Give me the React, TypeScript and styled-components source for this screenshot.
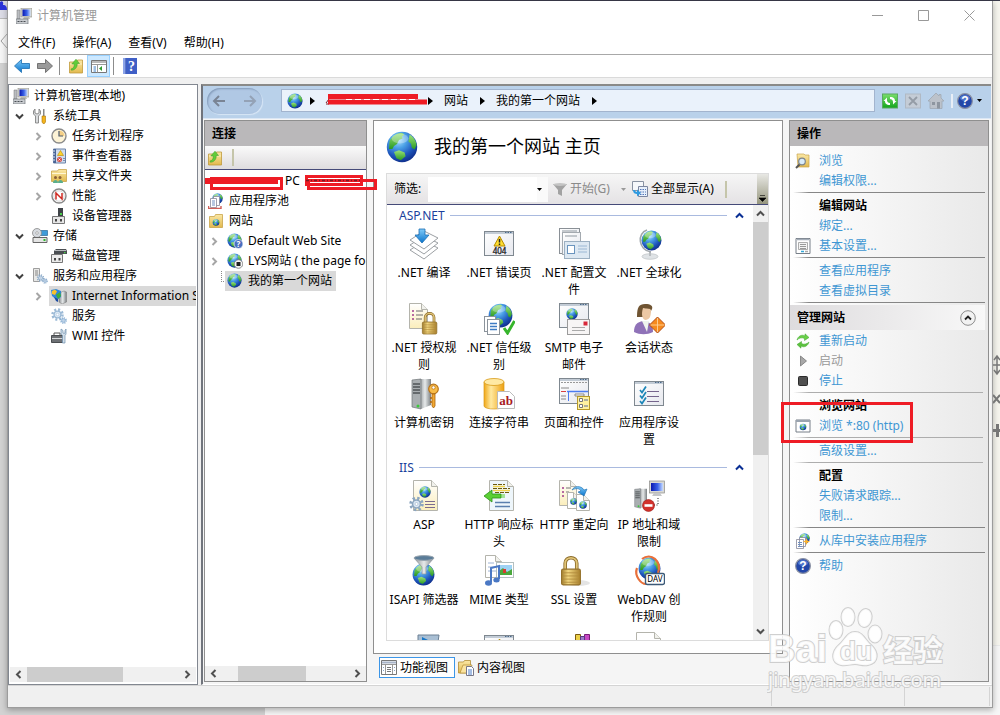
import React from "react";
import styled, { createGlobalStyle, css } from "styled-components";

const GlobalStyle = createGlobalStyle`
  *, *::before, *::after { box-sizing: border-box; }
  body {
    margin: 0;
    font-family: "Noto Sans", "Noto Sans CJK SC", sans-serif;
    font-size: 12px;
    line-height: 16px;
    color: #000;
  }
  button, input { font: inherit; color: inherit; }
  button {
    border: 0;
    padding: 0;
    background: none;
    white-space: nowrap;
    text-align: left;
  }
  ul { list-style: none; margin: 0; padding: 0; }
  h1, h2, h3 { margin: 0; font-weight: normal; font-size: 12px; }
  svg { display: block; flex: none; }
`;

/* ---------- desktop and window frame ---------- */

const Desktop = styled.div`
  position: relative;
  display: flex;
  flex-direction: column;
  height: 100vh;
  min-height: 560px;
  padding: 1px 7px 7px;
  overflow: hidden;
  background:
    linear-gradient(#3a3a4a, #3a3a4a) 0 0 / 100% 1px no-repeat,
    linear-gradient(#dcdce6 18px, #bbb 18px, #bbb 19px, #f6f6f6 19px, #f6f6f6 63px, #ccc 63px, transparent 64px) 0 0 / 7px 100% no-repeat,
    linear-gradient(#f6f5ee 645px, #ddd 645px, #f6f6f6 646px) 100% 0 / 7px 100% no-repeat,
    linear-gradient(90deg, #d2d2d2 265px, #f5f5f5 265px);
`;

const DesktopGlyphs = styled.svg<{ $side: "left" | "right" }>`
  position: absolute;
  top: 0;
  ${(p) => p.$side}: 0;
`;

const Window = styled.main`
  flex: 1;
  min-height: 0;
  display: flex;
  flex-direction: column;
  background: #f0f0f0;
  border: 1px solid #9c9c9c;
  border-top: 0;
  box-shadow: 0 2px 6px rgba(0, 0, 0, 0.3);
`;

const TitleBar = styled.header`
  display: flex;
  align-items: center;
  height: 29px;
  padding-left: 8px;
  background: #fff;
  color: #999;
`;

const TitleText = styled.h1`
  flex: 1;
  padding-left: 5px;
`;

const CaptionButton = styled.button`
  display: flex;
  align-items: center;
  justify-content: center;
  width: 46px;
  height: 29px;
`;

const MenuBar = styled.nav`
  display: flex;
  align-items: center;
  gap: 17px;
  height: 25px;
  padding: 2px 10px 0;
  background: #fff;
  border-bottom: 1px solid #a8a8a8;
`;

const ToolBar = styled.div`
  display: flex;
  align-items: center;
  height: 23px;
  padding-left: 2px;
  background: #fff;
  border-bottom: 1px solid #dadada;
`;

const ToolButton = styled.button<{ $active?: boolean }>`
  display: flex;
  align-items: center;
  justify-content: center;
  width: 23px;
  height: 22px;
  ${(p) =>
    p.$active &&
    css`
      background: #cce8ff;
      border: 1px solid #99d1ff;
    `}
`;

const ToolDivider = styled.span`
  width: 1px;
  height: 18px;
  margin: 0 4px 0 3px;
  background: #8c8c8c;
`;

const Workspace = styled.div`
  flex: 1;
  min-height: 0;
  display: flex;
  gap: 3px;
  padding-top: 6px;
`;

const StatusBar = styled.footer`
  display: flex;
  justify-content: flex-end;
  height: 22px;
  padding: 1px 2px 1px 0;
  border-top: 1px solid #d4d4d4;
`;

const StatusCell = styled.span<{ $w: number }>`
  width: ${(p) => p.$w}px;
  border-left: 1px solid #d4d4d4;
`;

/* ---------- trees ---------- */

const ConsolePane = styled.aside`
  display: flex;
  flex-direction: column;
  width: 190px;
  padding: 0 1px 2px;
  background: #fff;
  border: 1px solid #828790;
`;

const Tree = styled.ul`
  flex: 1;
  min-height: 0;
  padding-top: 1px;
  overflow: hidden;
`;

const TreeRow = styled.li<{ $pad: number }>`
  display: flex;
  align-items: center;
  height: 20px;
  padding-left: ${(p) => p.$pad}px;
`;

const Twisty = styled.span`
  display: flex;
  flex: none;
  width: 15px;
`;

const NodeButton = styled.button<{ $selected?: boolean; $wide?: boolean }>`
  display: flex;
  align-items: center;
  gap: 5px;
  height: 20px;
  padding: 0 4px 0 2px;
  ${(p) => p.$wide && "flex: none; min-width: 100%;"}
  ${(p) => p.$selected && "background: #d9d9d9;"}
`;

/* ---------- scroll bars ---------- */

const ScrollTrack = styled.div<{ $vertical?: boolean }>`
  display: flex;
  flex: none;
  flex-direction: ${(p) => (p.$vertical ? "column" : "row")};
  ${(p) => (p.$vertical ? "width: 15px;" : "height: 15px;")}
  background: #f0f0f0;
`;

const ScrollButton = styled.button<{ $vertical?: boolean }>`
  display: flex;
  align-items: center;
  justify-content: center;
  flex: none;
  width: ${(p) => (p.$vertical ? 15 : 17)}px;
  height: ${(p) => (p.$vertical ? 17 : 15)}px;
`;

const ScrollLane = styled.div`
  flex: 1;
  min-height: 0;
`;

const Thumb = styled.div<{ $start: string; $size: string; $vertical?: boolean }>`
  background: #cdcdcd;
  ${(p) =>
    p.$vertical
      ? `height: ${p.$size}; width: 15px;`
      : `width: ${p.$size}; height: 15px; margin-left: ${p.$start};`}
`;

/* ---------- manager frame ---------- */

const Manager = styled.section`
  flex: 1;
  min-width: 0;
  display: flex;
  flex-direction: column;
  margin-right: 1px;
  background: #f5f5f5;
  border-top: 2px solid #8a8a88;
  border-left: 2px solid #70747c;
  border-bottom: 1px solid #fff;
`;

const AddressRow = styled.div`
  display: flex;
  align-items: center;
  height: 33px;
  padding: 0 9px 3px 4px;
  background: #b9d1ea;
  border-bottom: 1px solid #dbe7f5;
`;

const NavCapsule = styled.div`
  display: flex;
  align-items: center;
  justify-content: space-between;
  width: 55px;
  height: 26px;
  padding: 0 5px;
  margin-right: 19px;
  border-radius: 13px;
  background: #b0c8e4;
  box-shadow: inset 1px 1px 2px #8299b8, 1px 1px 1px #d8e6f6;
`;

const AddressBox = styled.div`
  flex: 1;
  display: flex;
  align-items: center;
  height: 23px;
  padding-left: 5px;
  background: #eaf2fb;
  border: 1px solid #a2b4ce;
`;

const AddressGlobe = styled.span`
  margin-right: 7px;
`;

const Crumb = styled.button`
  margin: 0 12px 0 11px;
`;

const StruckName = styled.svg`
  overflow: visible;
`;

const AddressTools = styled.div`
  display: flex;
  align-items: center;
  gap: 7px;
  padding-left: 7px;
`;

const HelpGroup = styled.div`
  display: flex;
  align-items: center;
  gap: 4px;
`;

const AddressDivider = styled.span`
  width: 2px;
  height: 14px;
  background: #e8eef6;
`;

const Panels = styled.div`
  flex: 1;
  min-height: 0;
  display: flex;
  gap: 6px;
  padding: 1px 2px 2px 1px;
`;

const PanelHead = styled.h2`
  flex: none;
  height: 25px;
  padding-left: 7px;
  line-height: 25px;
  font-weight: bold;
  background: #bab8ba;
`;

const ConnectionsPane = styled.aside`
  position: relative;
  display: flex;
  flex-direction: column;
  width: 163px;
  background: #fff;
  border: 1px solid #8f8f8f;
`;

const ConnectionsTools = styled.div`
  display: flex;
  align-items: center;
  gap: 9px;
  height: 24px;
  padding-left: 2px;
  background: linear-gradient(#fafafa, #dedcde);
  border-bottom: 1px solid #454a78;
`;

const BeigeDivider = styled.span<{ $gap?: number }>`
  width: 2px;
  height: 17px;
  margin-left: ${(p) => p.$gap ?? 0}px;
  background: #c5c5aa;
`;

const RedMarks = styled.svg`
  position: absolute;
  left: 0;
  top: 53px;
  overflow: visible;
`;

/* ---------- middle column ---------- */

const MiddleColumn = styled.div`
  flex: 1;
  min-width: 0;
  display: flex;
  flex-direction: column;
`;

const HomePane = styled.section`
  flex: 1;
  min-height: 0;
  display: flex;
  flex-direction: column;
  padding: 0 13px 12px 12px;
  background: #fff;
  border: 1px solid #8f8f8f;
`;

const HomeHeader = styled.header`
  display: flex;
  align-items: center;
  gap: 16px;
  height: 52px;
`;

const HomeTitle = styled.h2`
  padding-bottom: 2px;
  font-size: 18px;
  line-height: 24px;
`;

const FeatureBox = styled.div`
  flex: 1;
  min-height: 0;
  display: flex;
  flex-direction: column;
  border: 1px solid #dcdcdc;
`;

const FilterBar = styled.form`
  display: flex;
  align-items: center;
  height: 31px;
  padding-left: 7px;
  background: linear-gradient(#f6f6f6, #e4e2e4);
  border-bottom: 1px solid #454a78;
`;

const FilterLabel = styled.label`
  width: 34px;
`;

const FilterInput = styled.input`
  width: 109px;
  height: 25px;
  border: 0;
  outline: 0;
  background: #fff;
`;

const FilterDrop = styled.button`
  display: flex;
  align-items: center;
  width: 11px;
  height: 25px;
  margin-right: 5px;
  background: #fafafa;
`;

const FilterAction = styled.button<{ $disabled?: boolean }>`
  display: flex;
  align-items: center;
  gap: 3px;
  color: ${(p) => (p.$disabled ? "#8a8a8a" : "#000")};
`;

const SplitArrow = styled.button`
  width: 22px;
  padding-left: 11px;
`;

const Overflow = styled.button`
  display: flex;
  align-items: flex-end;
  justify-content: center;
  align-self: stretch;
  width: 11px;
  margin-left: auto;
  padding-bottom: 2px;
  background: linear-gradient(#e8e8e4, #96967e);
`;

const FeatureScroller = styled.div`
  flex: 1;
  min-height: 0;
  display: flex;
`;

const FeatureList = styled.div`
  flex: 1;
  min-width: 0;
  overflow: hidden;
`;

const GroupHead = styled.h3`
  display: flex;
  align-items: center;
  height: 21px;
  padding: 0 9px 0 12px;
  color: #1b3f9c;
`;

const GroupRule = styled.span`
  flex: 1;
  height: 1px;
  margin: 0 8px 0 5px;
  background: #a9badf;
`;

const FeatureGrid = styled.div`
  display: grid;
  grid-template-columns: repeat(auto-fill, 75px);
  grid-auto-rows: 75px;
  margin: 1px 0 5px;
`;

const FeatureButton = styled.button`
  display: flex;
  flex-direction: column;
  align-items: center;
  gap: 4px;
  height: 75px;
  padding: 1px 1px 0 0;
  text-align: center;
  line-height: 17px;
`;

const ViewTabs = styled.div`
  display: flex;
  gap: 2px;
  height: 28px;
  padding: 3px 0 0 6px;
`;

const ViewTab = styled.button<{ $active?: boolean }>`
  display: flex;
  align-items: center;
  gap: 3px;
  height: 21px;
  padding: 0 6px 0 1px;
  border: ${(p) => (p.$active ? "1px solid #3c96e8" : "0")};
  ${(p) => p.$active && "background: #fff;"}
`;

/* ---------- actions ---------- */

const ActionsPane = styled.aside`
  display: flex;
  flex-direction: column;
  width: 200px;
  background: linear-gradient(90deg, #fff, #e9e9e9);
  border: 1px solid #8f8f8f;
`;

const ActionList = styled.ul`
  padding: 4px 3px 0 0;
`;

const ActionRow = styled.li`
  display: flex;
  align-items: center;
  height: 20px;
  padding-top: 2px;
`;

const ActionIcon = styled.span`
  display: flex;
  justify-content: center;
  flex: none;
  width: 26px;
  margin-right: 3px;
`;

const ActionLink = styled.a<{ $disabled?: boolean }>`
  color: ${(p) => (p.$disabled ? "#999" : "#3f97d3")};
  text-decoration: none;
`;

const ActionRule = styled.li<{ $soft?: boolean }>`
  height: 5px;
  padding: 2px 0;

  &::before {
    content: "";
    display: block;
    height: 1px;
    margin: 0 ${(p) => (p.$soft ? 2 : 0)}px 0 3px;
    background: linear-gradient(90deg, transparent, ${(p) => (p.$soft ? "#adadad" : "#868686")} 16px);
  }
`;

const ActionSection = styled.li`
  display: flex;
  align-items: center;
  justify-content: space-between;
  height: 25px;
  padding: 0 9px 0 7px;
  background: linear-gradient(90deg, #dedcde, #f8f8f8);
  font-weight: bold;
`;

const Framed = styled.li`
  position: relative;
`;

const HighlightFrame = styled.span`
  position: absolute;
  left: -9px;
  top: 7px;
  width: 132px;
  height: 41px;
  border: 3px solid #ee1c25;
  pointer-events: none;
`;

const Watermark = styled.svg`
  position: absolute;
  right: 47px;
  bottom: 18px;
  pointer-events: none;
`;

const SharedDefs = styled.svg`
  position: absolute;
`;

/* ---------- drawings ---------- */

type IconProps = { size?: number; box?: number; children?: React.ReactNode };

const Icon = ({ size = 16, box, children }: IconProps) => (
  <svg width={size} height={size} viewBox={`0 0 ${box ?? size} ${box ?? size}`} aria-hidden="true">
    {children}
  </svg>
);

const Gradients = () => (
  <SharedDefs width="0" height="0" aria-hidden="true">
    <defs>
      <radialGradient id="sea" cx=".38" cy=".26" r=".78">
        <stop offset="0" stopColor="#b4e6ff" />
        <stop offset=".35" stopColor="#4a9fe6" />
        <stop offset=".7" stopColor="#1e56bc" />
        <stop offset="1" stopColor="#0e2c88" />
      </radialGradient>
      <linearGradient id="land" x2="0" y2="1">
        <stop offset="0" stopColor="#9be27a" />
        <stop offset="1" stopColor="#2a9a22" />
      </linearGradient>
      <linearGradient id="folder" x2="0" y2="1">
        <stop offset="0" stopColor="#fbe8a6" />
        <stop offset="1" stopColor="#e2b94e" />
      </linearGradient>
      <linearGradient id="gold" x2="1">
        <stop offset="0" stopColor="#a07c2c" />
        <stop offset=".35" stopColor="#f2d780" />
        <stop offset="1" stopColor="#a87f2c" />
      </linearGradient>
      <linearGradient id="drum" x2="1">
        <stop offset="0" stopColor="#f0a818" />
        <stop offset=".35" stopColor="#ffe9a0" />
        <stop offset="1" stopColor="#eea010" />
      </linearGradient>
      <linearGradient id="steel" x2="1">
        <stop offset="0" stopColor="#8b8f92" />
        <stop offset=".5" stopColor="#e6e9ea" />
        <stop offset="1" stopColor="#7b8083" />
      </linearGradient>
      <linearGradient id="screen" x2="1">
        <stop offset="0" stopColor="#0a18b0" />
        <stop offset=".55" stopColor="#3a62e8" />
        <stop offset="1" stopColor="#c8dcff" />
      </linearGradient>
      <linearGradient id="sheet" x2="1" y2="1">
        <stop offset="0" stopColor="#fff" />
        <stop offset="1" stopColor="#e6e8ee" />
      </linearGradient>
      <linearGradient id="cream" x2="0" y2="1">
        <stop offset="0" stopColor="#fff" />
        <stop offset="1" stopColor="#fbeebb" />
      </linearGradient>
      <linearGradient id="blue" x2="0" y2="1">
        <stop offset="0" stopColor="#7fcaf8" />
        <stop offset="1" stopColor="#0a74cc" />
      </linearGradient>
      <linearGradient id="green" x2="0" y2="1">
        <stop offset="0" stopColor="#7be06c" />
        <stop offset="1" stopColor="#12a41c" />
      </linearGradient>
    </defs>
  </SharedDefs>
);

const GlobeShape = ({ x = 0, y = 0, d = 16 }: { x?: number; y?: number; d?: number }) => (
  <g transform={`translate(${x} ${y}) scale(${d / 16})`}>
    <circle cx="8" cy="8" r="7.6" fill="url(#sea)" />
    <path d="M1.800 5C3.300 2.300 5.500 1 8 1l1.200.7L8 2.700l.3 1L6.500 4.500 5.500 6.500 4 7.500 3.200 9 1.500 9z" fill="url(#land)" />
    <path d="M11.800 1.800c2 1.200 3.200 3 3.500 5.200l-1 2.200-1.400-.8-.4-2-1.300-1.200z" fill="url(#land)" />
    <path d="M4 10.500l2.500-.9 2.800 1.200.5 1.800-2.400 2-2.200-1z" fill="url(#land)" />
    <ellipse cx="7" cy="3.800" rx="4.200" ry="2.400" fill="#fff" opacity=".3" />
  </g>
);

const GlobeIcon = ({ size = 16 }: { size?: number }) => (
  <Icon size={size} box={16}>
    <GlobeShape />
  </Icon>
);

const ComputerIcon = () => (
  <Icon>
    <path d="M5 0h11v9H5z" fill="#d6d6ce" stroke="#8c8c88" strokeWidth=".6" />
    <path d="M6.500 1.500h8V8h-8z" fill="url(#screen)" />
    <path d="M8 9h5l1 2H7z" fill="#b8b8b0" />
    <path d="M1 2h3v9H1z" fill="#b9bcc0" stroke="#777" strokeWidth=".5" />
    <path d="M0 11h12v5H0z" fill="#c9ccd0" stroke="#6f747a" strokeWidth=".7" />
    <path d="M1.500 13.500h2m1 0h2m1 0h2" stroke="#4a4f55" />
  </Icon>
);

const HelpBookIcon = () => (
  <Icon>
    <path d="M1 0h14v16H1z" fill="#2c4aa8" />
    <path d="M1 0h2.500v16H1z" fill="#8ca4e8" />
    <path d="M4 0h11v16H4z" fill="#3f5fc6" />
    <text x="9.500" y="13" fontSize="14" fontWeight="bold" textAnchor="middle" fill="#fff" fontFamily="Liberation Serif, serif">?</text>
  </Icon>
);

const HelpRoundIcon = () => (
  <Icon>
    <circle cx="8" cy="8" r="7.400" fill="#2347a8" stroke="#8c92a4" strokeWidth="1.200" />
    <ellipse cx="8" cy="5" rx="5" ry="3" fill="#6f94e4" opacity=".6" />
    <text x="8" y="12.300" fontSize="12" fontWeight="bold" textAnchor="middle" fill="#fff" fontFamily="Liberation Sans, sans-serif">?</text>
  </Icon>
);

const FolderUpIcon = () => (
  <Icon>
    <path d="M1.500 4h7l1-2h5v13h-13z" fill="url(#folder)" stroke="#c09a3c" strokeWidth=".8" />
    <path d="M2 6h12" stroke="#fff4cc" strokeWidth=".8" />
    <path d="M3 11c2.500-.5 3.500-2.500 3.200-5H3.800L8 1.200l3.500 4.300H9.200c.3 4-2.200 6.500-5.700 6.800z" fill="#62cc3a" stroke="#3a9a20" strokeWidth=".5" />
  </Icon>
);

const ArrowIcon = ({ back }: { back?: boolean }) => (
  <Icon>
    <path
      d={back ? "M0.500 8l7-6.500v4h8v5h-8v4z" : "M15.500 8l-7-6.500v4h-8v5h8v4z"}
      fill={back ? "url(#blue)" : "#9a9a9a"}
      stroke={back ? "#2a78b8" : "#6a6a6a"}
      strokeWidth=".9"
    />
  </Icon>
);

const PaneIcon = () => (
  <Icon>
    <path d="M.5 2.500h15v12H.5z" fill="#fff" stroke="#777" />
    <path d="M1 3h14v2H1z" fill="#b9b9b9" />
    <path d="M1 6.500h14M6.500 7v7.500" stroke="#999" />
    <path d="M2.500 9h2.500m-2.500 2h2.500m-2.500 2h2.500" stroke="#3c7ec4" />
    <path d="M11 8v5L8 10.500z" fill="#2f9a2f" />
  </Icon>
);

const ToolsIcon = () => (
  <Icon>
    <path d="M3 1v4l2 1 2-1V1l1.500 2v3L6.500 8v7h-3V8L1.500 6V3z" fill="#d9dbdd" stroke="#777" strokeWidth=".8" />
    <path d="M11 1h1.500v8H11z" fill="#888" />
    <path d="M10 8h3.500v6l-1 1.500h-1.500l-1-1.500z" fill="#f4b41c" stroke="#a8740a" strokeWidth=".6" />
  </Icon>
);

const ClockIcon = () => (
  <Icon>
    <circle cx="8" cy="8" r="7" fill="#fdf3d6" stroke="#8b8b8b" strokeWidth="1.400" />
    <path d="M8 8V2.500A5.500 5.500 0 0 1 13.500 8z" fill="#f4cf86" />
    <path d="M8 3v5h4" fill="none" stroke="#4c5a6e" strokeWidth="1.200" />
  </Icon>
);

const EventIcon = () => (
  <Icon>
    <path d="M2.500 1h12v14h-12z" fill="#cfdcee" stroke="#6a82a8" />
    <path d="M2.500 1h2.500v14H2.500z" fill="#4a6596" />
    <path d="M1 3h3M1 6h3M1 9h3M1 12h3" stroke="#dfe7f4" />
    <path d="M9.500 2.500l3 5h-6z" fill="#ffd42a" stroke="#b98a00" strokeWidth=".6" />
    <circle cx="8.500" cy="11.500" r="2.500" fill="#d84a40" />
    <path d="M7.500 10.500l2 2m0-2l-2 2" stroke="#fff" strokeWidth=".8" />
    <path d="M12 10.500h2m-2 2h2" stroke="#7a8cae" />
  </Icon>
);

const SharedFolderIcon = () => (
  <Icon>
    <path d="M.5 3h6l1-1.500h8v12H.5z" fill="url(#folder)" stroke="#c9a44a" strokeWidth=".8" />
    <path d="M1 5.500h14" stroke="#fff6d4" />
    <circle cx="4.500" cy="9.500" r="1.500" fill="#8a6038" />
    <circle cx="9" cy="9.500" r="1.500" fill="#8a6038" />
    <path d="M2 15c0-4 5-4 5 0zM7 15c0-4 5-4 5 0z" fill="#5aae8c" />
  </Icon>
);

const PerformanceIcon = () => (
  <Icon>
    <circle cx="8" cy="8" r="7" fill="#fff" stroke="#888" strokeWidth="1.400" />
    <circle cx="8" cy="8" r="5.200" fill="none" stroke="#c9c9c9" strokeWidth=".7" />
    <path d="M5 11.500V5l6 6V5" fill="none" stroke="#cf2a22" strokeWidth="1.500" />
  </Icon>
);

const DeviceIcon = () => (
  <Icon>
    <path d="M7 0h5v9H7z" fill="#3f4347" />
    <path d="M9 5h2v2H9z" fill="#4ad04a" />
    <path d="M1.500 8.500h12v7h-12z" fill="#e6e6e6" stroke="#777" />
    <path d="M4 11h2v2.500H4zM9 11h2v2.500H9z" fill="#444" />
  </Icon>
);

const StorageIcon = () => (
  <Icon>
    <path d="M6 2.500h9.500v5H6z" fill="#3f9bd8" stroke="#2c6a9a" strokeWidth=".7" />
    <circle cx="5" cy="5" r="4.500" fill="#d7dbe0" stroke="#888" strokeWidth=".8" />
    <circle cx="5" cy="5" r="1.300" fill="#fff" stroke="#888" strokeWidth=".6" />
    <path d="M1 9.500h14v5H1z" fill="#e4e4e4" stroke="#666" />
    <path d="M11.500 11h2v2h-2z" fill="#2cb82c" />
  </Icon>
);

const DiskIcon = () => (
  <Icon>
    <path d="M3 3l2-2h10l1 2v3H3z" fill="#4a4e52" />
    <path d="M4 2.500h11" stroke="#b7babd" />
    <path d="M13 4h1.500v1.200H13z" fill="#4ad04a" />
    <path d="M.5 6.500h11v8H.5z" fill="#ececec" stroke="#777" />
    <path d="M3 10h2v2.500H3zM7.500 10h2v2.500h-2z" fill="#444" />
  </Icon>
);

const Gear = ({ cx, cy, r, color }: { cx: number; cy: number; r: number; color: string }) => (
  <g>
    <circle cx={cx} cy={cy} r={r} fill="none" stroke={color} strokeWidth={r * 0.5} strokeDasharray={`${r * 0.4} ${r * 0.385}`} />
    <circle cx={cx} cy={cy} r={r * 0.68} fill="#dce8f4" stroke={color} strokeWidth={r * 0.28} />
    <circle cx={cx} cy={cy} r={r * 0.26} fill="#fff" stroke={color} strokeWidth=".5" />
  </g>
);

const ServicesIcon = () => (
  <Icon>
    <path d="M1.500.5h6v13h-6z" fill="#e8e8e6" stroke="#888" strokeWidth=".8" />
    <path d="M3 3h3m-3 2h3m-3 2h3" stroke="#888" />
    <Gear cx={8.5} cy={10} r={3} color="#8aa9c8" />
    <Gear cx={13} cy={13} r={2.2} color="#7ea2c6" />
  </Icon>
);

const GearsIcon = () => (
  <Icon>
    <Gear cx={6.5} cy={6.5} r={5} color="#9cbad6" />
    <Gear cx={12.5} cy={12.5} r={2.7} color="#7aa4cc" />
  </Icon>
);

const IisIcon = () => (
  <Icon>
    <path d="M8 5l5-2 2.500 1v10L11 16l-3-2z" fill="url(#steel)" stroke="#777" strokeWidth=".5" />
    <path d="M0 2l5-1 5 2v6l-4 3-5-4z" fill="#2f86dc" />
    <path d="M1 3l3-1.500 2 2L4 7 1 6z" fill="#f8c12a" />
    <path d="M5 7l4-3 1 4-3 3z" fill="#3cae3c" />
    <path d="M3 9l4 2v3l-2-1z" fill="#1b4aa0" />
  </Icon>
);

const WmiIcon = () => (
  <Icon>
    <path d="M.5 7.500h12v7H.5z" fill="#6d7074" stroke="#4a4d50" />
    <path d="M3 7V5h6v2" fill="none" stroke="#555" />
    <path d="M1 10.500h11" stroke="#d6d8da" />
    <path d="M10 1l2 1.500V5l1 .5 1-.5V2.500L15 1v5l-1 1.500V15h-2.500V7.500L10 6z" fill="#d3dfe9" stroke="#6d8fb0" strokeWidth=".7" />
  </Icon>
);

const AppPoolIcon = () => (
  <Icon>
    <GlobeShape x={4} y={0} d={11} />
    <path d="M5.500 3.500h6v9h-6z" fill="#fff" stroke="#889" strokeWidth=".8" />
    <path d="M2.500 5.500h6v9h-6z" fill="#fff" stroke="#889" strokeWidth=".8" />
    <path d="M4 8h3m-3 2h3m-3 2h3" stroke="#6f8fc0" />
    <path d="M.5 13v2.500h12.500V13" fill="none" stroke="#cf5f58" strokeWidth="1.400" />
  </Icon>
);

const SitesFolderIcon = () => (
  <Icon>
    <path d="M1.500 3.500h5l1-2h7v13h-13z" fill="url(#folder)" stroke="#c9a44a" strokeWidth=".8" />
    <GlobeShape x={4.5} y={6} d={7} />
  </Icon>
);

const SiteIcon = ({ badge }: { badge?: "unknown" | "stopped" }) => (
  <Icon>
    <GlobeShape d={15} />
    {badge === "unknown" && (
      <g>
        <circle cx="11.500" cy="11" r="4.500" fill="#4a6fc0" stroke="#fff" strokeWidth=".7" />
        <text x="11.500" y="14" fontSize="8" fontWeight="bold" textAnchor="middle" fill="#fff">?</text>
      </g>
    )}
    {badge === "stopped" && (
      <g>
        <circle cx="11.500" cy="11" r="4.300" fill="#f4f4f4" stroke="#777" strokeWidth=".8" />
        <path d="M9.500 9h4v4h-4z" fill="#222" />
      </g>
    )}
  </Icon>
);

const chevronPaths = {
  left: "M6.500 1L3 4.500 6.500 8",
  right: "M2.500 1L6 4.500 2.500 8",
  up: "M1 6.500L4.500 3 8 6.500",
  down: "M1 2.500L4.500 6 8 2.500",
};

const Chevron = ({ dir, color = "#505050" }: { dir: keyof typeof chevronPaths; color?: string }) => (
  <Icon size={9}>
    <path d={chevronPaths[dir]} fill="none" stroke={color} strokeWidth="2" />
  </Icon>
);

const CornerDots = () => (
  <svg width="4" height="20" viewBox="0 0 4 20" aria-hidden="true">
    <path d="M.5 0v10M0 10.500h4" stroke="#8a8a8a" strokeDasharray="1 1" fill="none" />
  </svg>
);

const CrumbArrow = () => (
  <svg width="5" height="8" viewBox="0 0 5 8" aria-hidden="true">
    <path d="M0 0l5 4-5 4z" fill="#000" />
  </svg>
);

const DropArrow = ({ color = "#000" }: { color?: string }) => (
  <svg width="5" height="3" viewBox="0 0 5 3" aria-hidden="true">
    <path d="M0 0h5L2.500 3z" fill={color} />
  </svg>
);

const NavArrow = ({ back }: { back?: boolean }) => (
  <svg width="14" height="14" viewBox="0 0 14 14" aria-hidden="true">
    <path d={back ? "M13 7H2M7 2L2 7l5 5" : "M1 7h11M7 2l5 5-5 5"} fill="none" stroke={back ? "#7a8494" : "#94a2b6"} strokeWidth="2" />
  </svg>
);

/* 32px feature drawings */

const WindowShape = ({ x = 1, y = 3, w = 30, h = 25 }: { x?: number; y?: number; w?: number; h?: number }) => (
  <g>
    <rect x={x + 0.5} y={y + 0.5} width={w - 1} height={h - 1} fill="url(#sheet)" stroke="#7f8890" />
    <path d={`M${x + 1} ${y + 2}h${w - 2}`} stroke="#c3ccd6" strokeWidth="2" />
    <path d={`M${x + w - 9} ${y + 1.5}h7`} stroke="#4a6a8c" strokeDasharray="1.500 1" />
  </g>
);

const PageShape = ({ x = 2, y = 1, w = 20, h = 28, fill = "url(#cream)" }: { x?: number; y?: number; w?: number; h?: number; fill?: string }) => (
  <g>
    <path d={`M${x + 0.5} ${y + 0.5}h${w - 7}l6 6v${h - 7}h-${w - 1}z`} fill={fill} stroke="#b4b4ac" />
    <path d={`M${x + w - 6.5} ${y + 0.5}v6h6`} fill="#f1f1ec" stroke="#b4b4ac" />
  </g>
);

const PadlockShape = ({ x, y, s }: { x: number; y: number; s: number }) => (
  <g transform={`translate(${x} ${y}) scale(${s})`}>
    <path d="M4 13V7c0-7 11-7 11 0v6" fill="none" stroke="#8a6a28" strokeWidth="3.400" />
    <path d="M4 13V7c0-7 11-7 11 0v6" fill="none" stroke="#e0c478" strokeWidth="1.800" />
    <rect x="0.500" y="12.500" width="18" height="15" rx="1.500" fill="url(#gold)" stroke="#94722c" />
    <path d="M2 16h15M2 19h15M2 22h15M2 25h15" stroke="#b08a3c" strokeWidth=".8" />
  </g>
);

const ServerShape = ({ x, y, s }: { x: number; y: number; s: number }) => (
  <g transform={`translate(${x} ${y}) scale(${s})`}>
    <path d="M8 1h12v26l-10 4z" fill="url(#steel)" />
    <path d="M1 2l9-1v30l-9-2z" fill="#a9aeb1" stroke="#6f7477" strokeWidth=".7" />
    <path d="M2 6h7M2 9h7M2 12h7M2 15h7" stroke="#4f5457" strokeWidth="1.500" />
    <circle cx="7" cy="28" r="1.500" fill="#3cc83c" />
  </g>
);

const drawings: Record<string, React.ReactNode> = {
  compile: (
    <g stroke="#9ca0a4" fill="#fff">
      <path d="M2 22l14 9 14-11-14-7z" />
      <path d="M2 17l14 9 14-11-14-7z" />
      <path d="M2 12l14 9 14-11-14-7z" />
      <path d="M11 1h6v6h4l-7 8-7-8h4z" fill="url(#blue)" stroke="#1c6fb4" strokeWidth=".8" />
    </g>
  ),
  errors: (
    <g>
      <WindowShape />
      <path d="M16.500 8l5.500 10H11z" fill="#ffdd2e" stroke="#b58a00" />
      <path d="M16.500 11v3.500m0 1v1.500" stroke="#222" strokeWidth="1.500" />
      <text x="16.500" y="26" fontSize="8" textAnchor="middle" fill="#222" stroke="#222" strokeWidth=".3">404</text>
    </g>
  ),
  config: (
    <g>
      <rect x="1.500" y=".5" width="20" height="25" fill="url(#sheet)" stroke="#8a9096" />
      <rect x="4.500" y="4.500" width="18" height="22" fill="url(#sheet)" stroke="#a4aab0" />
      <path d="M4 3h15M7 8h12" stroke="#8f98a0" />
      <rect x="6.500" y="13.500" width="25" height="17" fill="#dde8f2" stroke="#9cb0c2" />
      <rect x="9.500" y="17.500" width="7" height="8" fill="#fff" stroke="#6a94be" />
      <path d="M20 18h9m-9 3h9m-9 3h9" stroke="#9cb8d4" />
    </g>
  ),
  globalization: (
    <g>
      <ellipse cx="17" cy="28.500" rx="8" ry="2.800" fill="#dfe3e6" stroke="#b4b8bc" strokeWidth=".6" />
      <path d="M16 23h2v5h-2z" fill="#b9bdc1" />
      <path d="M14 2C4 5 5 22 18 24" fill="none" stroke="#9fa6ac" strokeWidth="1.600" />
      <GlobeShape x={8} y={2} d={21} />
    </g>
  ),
  authorize: (
    <g>
      <PageShape x={1} y={0} w={19} h={26} />
      <path d="M8 8h7M8 12h7M8 16h6" stroke="#6a6a6a" />
      <path d="M4 8h2M4 12h2M4 16h2" stroke="#a03c8c" strokeWidth="1.600" />
      <PadlockShape x={14} y={9} s={0.8} />
    </g>
  ),
  trust: (
    <g>
      <GlobeShape x={5} y={0} d={25} />
      <rect x="1.500" y="13.500" width="11" height="15" fill="#fff" stroke="#8c949c" />
      <rect x="4.500" y="16.500" width="12" height="15" fill="#fff" stroke="#8c949c" />
      <path d="M7 20.500h7m-7 3h7m-7 3h7" stroke="#3f7cc4" strokeWidth="1.300" />
      <path d="M21 25l3.500 5L31.500 18" fill="none" stroke="#37b52c" strokeWidth="3" />
    </g>
  ),
  smtp: (
    <g>
      <WindowShape y={0} h={25} />
      <GlobeShape x={8} y={5} d={12} />
      <rect x="9.500" y="16.500" width="22" height="15" fill="#f7f5f5" stroke="#9b9b9b" />
      <path d="M25.500 18.500h4v4h-4z" fill="#d8283a" />
      <path d="M14 24.500h13m-13 3h13" stroke="#aaa" />
    </g>
  ),
  session: (
    <g>
      <path d="M1 29c0-7 3-10 9-11 8 1 10 4 10 11-6 3-13 3-19 0z" fill="#8f72b8" />
      <path d="M9 18l5 11 2-11z" fill="#eef4ee" />
      <path d="M4 14C4 4 6 1 12 1s8 2 7 5l-4 8H8z" fill="#6f5432" />
      <path d="M10 5c4 1 7 0 8 2 0 8-2 9-5 10-4 0-5-6-3-12z" fill="#ecc8a4" />
      <path d="M24.500 14l8 8-8 8-8-8z" fill="#f68a1e" stroke="#b04c18" />
      <path d="M24.500 15v14M17.500 22h14" stroke="#ffd39a" strokeWidth=".9" />
    </g>
  ),
  machineKey: (
    <g>
      <ServerShape x={3} y={0} s={1} />
      <circle cx="25.500" cy="11" r="4.800" fill="#f8bc48" stroke="#b8741a" strokeWidth="1.200" />
      <circle cx="25.500" cy="9.500" r="1.700" fill="#fff" stroke="#b8741a" strokeWidth=".8" />
      <path d="M24 16h3v12l-1.500 2-1.500-2z" fill="#f2a832" stroke="#a8640f" strokeWidth=".8" />
      <path d="M24 20h-2m2 4h-2" stroke="#a8640f" strokeWidth="1.500" />
    </g>
  ),
  connection: (
    <g>
      <path d="M1 4v24c0 4 20 4 20 0V4z" fill="url(#drum)" stroke="#d89a18" strokeWidth=".7" />
      <ellipse cx="11" cy="4" rx="10" ry="3.500" fill="#ffe9a4" stroke="#d89a18" strokeWidth=".8" />
      <path d="M14.500 13.500h12l5 5v12h-17z" fill="#fff" stroke="#bbb" />
      <text x="23" y="27" fontSize="13" fontWeight="bold" textAnchor="middle" fill="#a81c24" fontFamily="Liberation Serif, serif">ab</text>
    </g>
  ),
  controls: (
    <g>
      <WindowShape y={0} h={26} />
      <path d="M3 4.500h26" stroke="#999" strokeDasharray="2 1" />
      <path d="M3 10h8M3 18h5m-5 3h5" stroke="#888" />
      <path d="M3 13.500h5" stroke="#d84040" />
      <path d="M9 13.500h21" stroke="#4c7cf0" strokeWidth="1.500" />
      <path d="M10.500 14v9" stroke="#4c7cf0" />
      <path d="M17 16h9v2h-9z" fill="#fff" stroke="#888" />
      <rect x="19.500" y="18.500" width="12" height="13" fill="#fff2a0" stroke="#b89a28" />
      <path d="M21.500 20.500h3v3h-3zM21.500 26.500h3v3h-3z" fill="#fff" stroke="#777" />
      <path d="M26 22h4m-4 6h4" stroke="#5a6a9c" />
    </g>
  ),
  appSettings: (
    <g>
      <WindowShape y={3} h={25} />
      <path d="M14 13.500h12M14 18.500h12M14 23.500h12" stroke="#75658c" />
      <path d="M7 12l2 2.500 4-6M7 17.500l2 2.500 4-6M7 23l2 2.500 4-6" fill="none" stroke="#1c86b8" strokeWidth="1.700" />
    </g>
  ),
  asp: (
    <g>
      <PageShape x={5} y={0} w={25} h={31} />
      <GlobeShape x={11} y={6} d={12} />
      <path d="M17 21.500h10M17 24.500h10M17 27.500h10" stroke="#7c6c90" />
      <Gear cx={8.5} cy={24} r={5.8} color="#8ca6c0" />
    </g>
  ),
  headers: (
    <g>
      <PageShape x={6} y={0} w={25} h={31} fill="#eef6fb" />
      <path d="M10 4.500h12M10 8.500h17M12 12.500h15" stroke="#6c5a10" strokeDasharray="4 1" />
      <path d="M10 6.500h12M10 10.500h17" stroke="#f3d64c" strokeWidth="1.500" />
      <path d="M1 16l8-6v4h9v4H9v4z" fill="#5bcf35" stroke="#2c9218" strokeWidth=".8" />
      <path d="M19 14v4m2-4v4" stroke="#5bcf35" />
      <path d="M12 22.500h15M12 26.500h15" stroke="#5a7fae" strokeWidth="1.300" />
    </g>
  ),
  redirect: (
    <g>
      <PageShape x={1} y={0} w={18} h={26} />
      <path d="M4 8h2m-2 4h2m-2 4h2" stroke="#a03c8c" strokeWidth="1.600" />
      <path d="M8 8h5m-5 4h3" stroke="#777" />
      <PageShape x={9} y={12} w={13} h={17} fill="#fff" />
      <PageShape x={18} y={14} w={14} h={17} fill="#fff" />
      <GlobeShape x={12} y={18} d={7} />
      <GlobeShape x={21} y={21} d={8} />
      <path d="M14 10c2-4 9-5 12 0l3-1-3 7-6-4 3-1c-2-3-5-3-9-1z" fill="url(#blue)" stroke="#1a6cae" strokeWidth=".6" />
    </g>
  ),
  ip: (
    <g>
      <ServerShape x={1} y={8} s={0.65} />
      <rect x="16.500" y="1" width="15" height="12" fill="#d8d8d4" stroke="#8c8c88" strokeWidth=".7" />
      <path d="M18 3h12v8H18z" fill="url(#screen)" />
      <path d="M21 13h6l2 3H19z" fill="#c4c6c8" />
      <path d="M25 18v7h-4" fill="none" stroke="#222" strokeDasharray="1 1.500" />
      <circle cx="15.500" cy="25.500" r="6" fill="#d2312c" stroke="#9b1c18" strokeWidth=".6" />
      <path d="M11.500 25.500h8" stroke="#fff" strokeWidth="2.600" />
    </g>
  ),
  isapi: (
    <g>
      <GlobeShape x={4} y={8} d={23} />
      <path d="M6 3l8 9v7h4v-7l8-9z" fill="url(#steel)" stroke="#8f969e" strokeWidth=".7" />
      <ellipse cx="16" cy="3" rx="10" ry="2.400" fill="#5a7c98" stroke="#9aa6b0" />
    </g>
  ),
  mime: (
    <g>
      <PageShape x={2} y={0} w={17} h={23} fill="#fff" />
      <path d="M5 8h6m-6 4h9m-9 4h9" stroke="#9fb4d4" />
      <rect x="13.500" y="7.500" width="17" height="15" fill="#fff" stroke="#b4c0c0" />
      <path d="M16 10h13v10H16z" fill="#9fd2f4" />
      <path d="M16 20v-4l4-3 4 4 5-3v6z" fill="#4aa83c" />
      <path d="M20 14h3v4h-3z" fill="#d83a30" />
      <path d="M8 27V13l8-2v13" fill="none" stroke="#4a78c4" strokeWidth="2" />
      <ellipse cx="5.500" cy="28" rx="3.500" ry="2.700" fill="#4a78c4" />
      <ellipse cx="13.500" cy="25" rx="3.200" ry="2.500" fill="#4a78c4" />
    </g>
  ),
  ssl: (
    <g>
      <ellipse cx="20" cy="28" rx="12" ry="3" fill="#e4e4e4" />
      <PadlockShape x={3} y={1} s={1.05} />
    </g>
  ),
  webdav: (
    <g>
      <GlobeShape x={5} y={2} d={23} />
      <path d="M9 4C18-3 29 6 25 18M4 13c-3 8 4 16 9 16" fill="none" stroke="#e8703a" strokeWidth="2.200" />
      <rect x="12.500" y="18.500" width="19" height="11" rx="2" fill="#fff" stroke="#3c5a78" strokeWidth="1.400" />
      <text x="22" y="27" fontSize="8" textAnchor="middle" fill="#000">DAV</text>
    </g>
  ),
  clipPanel: (
    <g>
      <path d="M10 5h21l-2 14H10z" fill="#a9bfd4" stroke="#6c8094" />
      <path d="M14 7l8 4v6h-8z" fill="#1a78c8" />
    </g>
  ),
  clipWindow: (
    <g>
      <WindowShape y={5} />
      <path d="M16.500 9l6 11h-12z" fill="#ffdd2e" stroke="#b58a00" />
    </g>
  ),
  clipBooks: (
    <g>
      <path d="M17.500 4.500h5v20h-5z" fill="#ecd048" stroke="#7c5c10" />
      <path d="M26.500 4.500h5v20h-5z" fill="#c848c4" stroke="#7a1c78" />
      <path d="M22.500 6.500h4v20h-4z" fill="#9a7ac8" stroke="#5a3a80" />
    </g>
  ),
  clipPage: <PageShape x={3} y={2} w={25} h={30} fill="#fff" />,
};

/* ---------- data ---------- */

type Feature = [drawing: string, ...lines: string[]];

const aspFeatures: Feature[] = [
  ["compile", ".NET 编译"],
  ["errors", ".NET 错误页"],
  ["config", ".NET 配置文", "件"],
  ["globalization", ".NET 全球化"],
  ["authorize", ".NET 授权规", "则"],
  ["trust", ".NET 信任级", "别"],
  ["smtp", "SMTP 电子", "邮件"],
  ["session", "会话状态"],
  ["machineKey", "计算机密钥"],
  ["connection", "连接字符串"],
  ["controls", "页面和控件"],
  ["appSettings", "应用程序设", "置"],
];

const iisFeatures: Feature[] = [
  ["asp", "ASP"],
  ["headers", "HTTP 响应标", "头"],
  ["redirect", "HTTP 重定向"],
  ["ip", "IP 地址和域", "限制"],
  ["isapi", "ISAPI 筛选器"],
  ["mime", "MIME 类型"],
  ["ssl", "SSL 设置"],
  ["webdav", "WebDAV 创", "作规则"],
  ["clipPanel"],
  ["clipWindow"],
  ["clipBooks"],
  ["clipPage"],
];

type ConsoleNode = { level: 0 | 1 | 2; icon: React.ReactNode; label: string; state?: "open" | "closed"; selected?: boolean };

const consoleNodes: ConsoleNode[] = [
  { level: 0, icon: <ComputerIcon />, label: "计算机管理(本地)" },
  { level: 1, icon: <ToolsIcon />, label: "系统工具", state: "open" },
  { level: 2, icon: <ClockIcon />, label: "任务计划程序", state: "closed" },
  { level: 2, icon: <EventIcon />, label: "事件查看器", state: "closed" },
  { level: 2, icon: <SharedFolderIcon />, label: "共享文件夹", state: "closed" },
  { level: 2, icon: <PerformanceIcon />, label: "性能", state: "closed" },
  { level: 2, icon: <DeviceIcon />, label: "设备管理器" },
  { level: 1, icon: <StorageIcon />, label: "存储", state: "open" },
  { level: 2, icon: <DiskIcon />, label: "磁盘管理" },
  { level: 1, icon: <ServicesIcon />, label: "服务和应用程序", state: "open" },
  { level: 2, icon: <IisIcon />, label: "Internet Information Services", state: "closed", selected: true },
  { level: 2, icon: <GearsIcon />, label: "服务" },
  { level: 2, icon: <WmiIcon />, label: "WMI 控件" },
];

const levelPad = { 0: 1, 1: 5, 2: 24 };

/* ---------- pieces ---------- */

const HScroll = ({ start, size }: { start: string; size: string }) => (
  <ScrollTrack>
    <ScrollButton aria-label="向左滚动"><Chevron dir="left" /></ScrollButton>
    <ScrollLane><Thumb $start={start} $size={size} /></ScrollLane>
    <ScrollButton aria-label="向右滚动"><Chevron dir="right" /></ScrollButton>
  </ScrollTrack>
);

const FeatureGroup = ({ name, items }: { name: string; items: Feature[] }) => (
  <section>
    <GroupHead>
      {name}
      <GroupRule />
      <button aria-label={`折叠 ${name}`}><Chevron dir="up" color="#0a2f94" /></button>
    </GroupHead>
    <FeatureGrid>
      {items.map(([key, ...lines]) => (
        <FeatureButton key={key}>
          <Icon size={32}>{drawings[key]}</Icon>
          <span>
            {lines.map((line, i) => (
              <React.Fragment key={line}>
                {i > 0 && <br />}
                {line}
              </React.Fragment>
            ))}
          </span>
        </FeatureButton>
      ))}
    </FeatureGrid>
  </section>
);

const Action = ({ icon, disabled, children }: { icon?: React.ReactNode; disabled?: boolean; children: React.ReactNode }) => (
  <ActionRow>
    <ActionIcon>{icon}</ActionIcon>
    <ActionLink href="#" $disabled={disabled}>{children}</ActionLink>
  </ActionRow>
);

const ActionTitle = ({ children }: { children: React.ReactNode }) => (
  <ActionRow>
    <ActionIcon />
    <strong>{children}</strong>
  </ActionRow>
);

const ConnectionsPanel = () => (
  <ConnectionsPane>
    <PanelHead>连接</PanelHead>
    <ConnectionsTools>
      <button aria-label="上移"><FolderUpIcon /></button>
      <BeigeDivider />
    </ConnectionsTools>
    <Tree>
      <TreeRow $pad={78}><NodeButton>PC</NodeButton></TreeRow>
      <TreeRow $pad={1}><NodeButton><AppPoolIcon />应用程序池</NodeButton></TreeRow>
      <TreeRow $pad={1}><NodeButton><SitesFolderIcon />网站</NodeButton></TreeRow>
      <TreeRow $pad={5}>
        <Twisty><Chevron dir="right" color="#a6a6a6" /></Twisty>
        <NodeButton><SiteIcon badge="unknown" />Default Web Site</NodeButton>
      </TreeRow>
      <TreeRow $pad={5}>
        <Twisty><Chevron dir="right" color="#a6a6a6" /></Twisty>
        <NodeButton><SiteIcon badge="stopped" />LYS网站 ( the page for</NodeButton>
      </TreeRow>
      <TreeRow $pad={16}>
        <CornerDots />
        <NodeButton $selected><SiteIcon />我的第一个网站</NodeButton>
      </TreeRow>
    </Tree>
    <HScroll start="16px" size="68px" />
    <RedMarks width="174" height="18" viewBox="0 0 174 18" aria-hidden="true">
      <g fill="none" stroke="#ee1c25" strokeWidth="3">
        <path d="M6.500 4.500h70v10h-70z" />
        <path d="M0 7h73" strokeWidth="6" />
        <path d="M103.500 6.500h67v8h-67z" />
        <path d="M101.500 2.500h55v8h-55z" />
        <path d="M101 6.500h56" stroke="#7c1c24" strokeWidth="1.500" strokeDasharray="3 2 1 2" />
      </g>
    </RedMarks>
  </ConnectionsPane>
);

const HomePanel = () => (
  <MiddleColumn>
    <HomePane>
      <HomeHeader>
        <GlobeIcon size={32} />
        <HomeTitle>我的第一个网站 主页</HomeTitle>
      </HomeHeader>
      <FeatureBox>
        <FilterBar>
          <FilterLabel htmlFor="filter">筛选:</FilterLabel>
          <FilterInput id="filter" type="text" />
          <FilterDrop type="button" aria-label="筛选历史"><DropArrow /></FilterDrop>
          <FilterAction type="button" $disabled>
            <Icon size={14}>
              <path d="M0 2h14L9 8v6l-4-2V8z" fill="#a2a2a2" />
              <ellipse cx="7" cy="2.500" rx="6.500" ry="1.500" fill="#c4c4c4" />
            </Icon>
            开始(G)
          </FilterAction>
          <SplitArrow type="button" aria-label="开始选项"><DropArrow color="#999" /></SplitArrow>
          <FilterAction type="button">
            <Icon>
              <path d="M.5.5h11v9H.5z" fill="#f6f8fb" stroke="#8992a2" />
              <path d="M6.500 5.500h9v10h-9z" fill="#e8f0fb" stroke="#7c86a0" />
              <path d="M8 8.500h6M8 11h6M8 13.500h6" stroke="#5577b8" strokeDasharray="1.500 1" />
              <path d="M1 9c0 3 2 4 4 4v2.500L9 12 5 8.500V11c-1 0-2-1-2-2z" fill="#2f9ae0" />
            </Icon>
            全部显示(A)
          </FilterAction>
          <BeigeDivider $gap={11} />
          <Overflow type="button" aria-label="更多选项">
            <Icon size={7}>
              <path d="M1 .5h5M0 3h7L3.500 6.500z" fill="#000" stroke="#000" strokeWidth=".6" />
            </Icon>
          </Overflow>
        </FilterBar>
        <FeatureScroller>
          <FeatureList>
            <FeatureGroup name="ASP.NET" items={aspFeatures} />
            <FeatureGroup name="IIS" items={iisFeatures} />
          </FeatureList>
          <ScrollTrack $vertical>
            <ScrollButton $vertical aria-label="向上滚动"><Chevron dir="up" /></ScrollButton>
            <ScrollLane><Thumb $vertical $start="0" $size="58%" /></ScrollLane>
            <ScrollButton $vertical aria-label="向下滚动"><Chevron dir="down" /></ScrollButton>
          </ScrollTrack>
        </FeatureScroller>
      </FeatureBox>
    </HomePane>
    <ViewTabs>
      <ViewTab $active>
        <Icon>
          <path d="M.5.5h15v14H.5z" fill="#fff" stroke="#777" />
          <path d="M1 2.500h14" stroke="#a8b4c8" strokeWidth="2" />
          <path d="M4.500 4v10M11.500 4v10M1 4.500h14" stroke="#999" />
          <path d="M6 7.500h4m-4 2h4m-4 2h4" stroke="#777" />
          <path d="M2 7.500h1m-1 3h1m10-3h1m-1 3h1" stroke="#8aa4c8" />
        </Icon>
        功能视图
      </ViewTab>
      <ViewTab>
        <Icon>
          <path d="M.5 2h5l1-1.500h6V13H.5z" fill="url(#folder)" stroke="#b38d33" strokeWidth=".8" />
          <path d="M2 13L5 5h9l-2 8z" fill="#fbe4a0" stroke="#b38d33" strokeWidth=".7" />
          <path d="M8.500 6.500h5l2 2v7h-7z" fill="#fff" stroke="#778" />
          <path d="M10 10h4m-4 2h4m-4 2h4" stroke="#4a7cc8" />
        </Icon>
        内容视图
      </ViewTab>
    </ViewTabs>
  </MiddleColumn>
);

const ActionsPanel = () => (
  <ActionsPane>
    <PanelHead>操作</PanelHead>
    <ActionList>
      <Action
        icon={
          <Icon>
            <path d="M2 1h7l1 1h4v12H3z" fill="url(#folder)" stroke="#c9a44a" strokeWidth=".7" />
            <circle cx="7" cy="8.500" r="3.300" fill="#d9ecfa" stroke="#7c858e" strokeWidth="1.200" />
            <path d="M4.500 11.500L1 15" stroke="#555" strokeWidth="2" />
          </Icon>
        }
      >
        浏览
      </Action>
      <Action>编辑权限...</Action>
      <ActionRule />
      <ActionTitle>编辑网站</ActionTitle>
      <Action>绑定...</Action>
      <Action
        icon={
          <Icon>
            <path d="M1 .5h14v15H1z" fill="#fff" stroke="#777f88" />
            <path d="M2 1.500h12" stroke="#a4adb8" strokeWidth="1.500" />
            <path d="M3.500 4.500h9v7h-9z" fill="#f4f4f4" stroke="#999" strokeWidth=".8" />
            <path d="M5 6.500h6m-6 2h6m-6 2h6" stroke="#999" />
            <path d="M6 13.500h3" stroke="#34a8d8" strokeWidth="1.500" />
            <path d="M10 13.500h3" stroke="#aaa" strokeWidth="1.500" />
          </Icon>
        }
      >
        基本设置...
      </Action>
      <ActionRule />
      <Action>查看应用程序</Action>
      <Action>查看虚拟目录</Action>
      <ActionRule />
      <ActionSection>
        管理网站
        <button aria-label="折叠">
          <Icon>
            <circle cx="8" cy="8" r="7.300" fill="#f2f2f2" stroke="#8c8c8c" />
            <path d="M5 9.500l3-3 3 3" fill="none" stroke="#222" strokeWidth="1.800" />
          </Icon>
        </button>
      </ActionSection>
      <Action
        icon={
          <Icon>
            <path d="M2 7c1-4 5-6 8-4V.8L14 4.500 9.500 7.500V5.500C7 4.200 4 5 2 7z" fill="#6ad048" stroke="#3fa42c" strokeWidth=".5" />
            <path d="M14 9c-1 4-5 6-8 4v2.200L2 11.500 6.500 8.500v2C9 11.800 12 11 14 9z" fill="#5cc23e" stroke="#3fa42c" strokeWidth=".5" />
          </Icon>
        }
      >
        重新启动
      </Action>
      <Action disabled icon={<Icon><path d="M5.500 3v10l6-5z" fill="#a8a8a8" stroke="#777" strokeWidth=".8" /></Icon>}>
        启动
      </Action>
      <Action icon={<Icon><rect x="3.500" y="3.500" width="9" height="9" rx="1" fill="#505050" stroke="#2c2c2c" /></Icon>}>
        停止
      </Action>
      <ActionRule $soft />
      <Framed>
        <ul>
          <ActionTitle>浏览网站</ActionTitle>
          <Action
            icon={
              <Icon>
                <path d="M1 2h14v12H1z" fill="#fff" stroke="#777f88" />
                <path d="M1 3h14" stroke="#9aa4b0" strokeWidth="2" />
                <GlobeShape x={4.5} y={5.5} d={7} />
              </Icon>
            }
          >
            浏览 *:80 (http)
          </Action>
        </ul>
        <HighlightFrame />
      </Framed>
      <ActionRule $soft />
      <Action>高级设置...</Action>
      <ActionRule $soft />
      <ActionTitle>配置</ActionTitle>
      <Action>失败请求跟踪...</Action>
      <Action>限制...</Action>
      <ActionRule />
      <Action
        icon={
          <Icon>
            <GlobeShape x={4} y={0} d={11} />
            <path d="M4.500 4.500h6v9h-6zM1.500 6.500h7v9h-7z" fill="#fff" stroke="#889" strokeWidth=".8" />
            <path d="M3 9.500h4m-4 2h4m-4 2h4" stroke="#6f8fc0" />
            <path d="M11.500 5l1 2.500 2.500 1-2.500 1-1 2.500-1-2.500-2.500-1 2.500-1z" fill="#ffb52e" />
          </Icon>
        }
      >
        从库中安装应用程序
      </Action>
      <ActionRule />
      <Action icon={<HelpRoundIcon />}>帮助</Action>
    </ActionList>
  </ActionsPane>
);

export default function App() {
  return (
    <Desktop>
      <GlobalStyle />
      <Gradients />
      <DesktopGlyphs $side="left" width="7" height="60" viewBox="0 0 7 60" aria-hidden="true">
        <path d="M0 10V2c2-2 4 0 3 3 3 0 4 2 4 5z" fill="#2a32d8" />
        <path d="M7 34l-6 7 6 7" fill="none" stroke="#9a9a9a" />
      </DesktopGlyphs>
      <DesktopGlyphs $side="right" width="7" height="440" viewBox="0 0 7 440" aria-hidden="true">
        <path d="M4 357v16M1 360l3-4 3 4M1 370l3 4 3-4M0 365h7" fill="none" stroke="#777" strokeWidth="1.500" />
        <path d="M0 395l7 8M0 403l7-8" stroke="#777" strokeWidth="2" />
        <path d="M0 430.500h7M4.500 424v13" stroke="#777" strokeWidth="3" />
      </DesktopGlyphs>
      <Window>
        <TitleBar>
          <ComputerIcon />
          <TitleText>计算机管理</TitleText>
          <CaptionButton aria-label="最小化">
            <Icon size={11}><path d="M0 5.500h11" stroke="#999" /></Icon>
          </CaptionButton>
          <CaptionButton aria-label="最大化">
            <Icon size={11}><path d="M.5.500h10v10H.5z" fill="none" stroke="#999" /></Icon>
          </CaptionButton>
          <CaptionButton aria-label="关闭">
            <Icon size={11}><path d="M.5.500l10 10M10.500.500l-10 10" stroke="#999" /></Icon>
          </CaptionButton>
        </TitleBar>
        <MenuBar>
          <button>文件(F)</button>
          <button>操作(A)</button>
          <button>查看(V)</button>
          <button>帮助(H)</button>
        </MenuBar>
        <ToolBar>
          <ToolButton aria-label="后退"><ArrowIcon back /></ToolButton>
          <ToolButton aria-label="前进"><ArrowIcon /></ToolButton>
          <ToolDivider />
          <ToolButton aria-label="上移"><FolderUpIcon /></ToolButton>
          <ToolButton $active aria-label="显示控制台树"><PaneIcon /></ToolButton>
          <ToolDivider />
          <ToolButton aria-label="帮助"><HelpBookIcon /></ToolButton>
        </ToolBar>
        <Workspace>
          <ConsolePane>
            <Tree>
              {consoleNodes.map((node) => (
                <TreeRow key={node.label} $pad={levelPad[node.level]}>
                  {node.level > 0 && (
                    <Twisty>
                      {node.state && (
                        <Chevron dir={node.state === "open" ? "down" : "right"} color={node.state === "open" ? "#404040" : "#a6a6a6"} />
                      )}
                    </Twisty>
                  )}
                  <NodeButton $selected={node.selected} $wide={node.selected}>
                    {node.icon}
                    {node.label}
                  </NodeButton>
                </TreeRow>
              ))}
            </Tree>
            <HScroll start="0" size="96px" />
          </ConsolePane>
          <Manager>
            <AddressRow>
              <NavCapsule>
                <button aria-label="后退"><NavArrow back /></button>
                <button aria-label="前进"><NavArrow /></button>
              </NavCapsule>
              <AddressBox>
                <AddressGlobe><GlobeIcon /></AddressGlobe>
                <CrumbArrow />
                <Crumb aria-label="服务器">
                  <StruckName width="90" height="14" viewBox="0 0 90 14" aria-hidden="true">
                    <path d="M0 9l3-4M0 10h3" stroke="#7c1c24" />
                    <path d="M2 2.500h90M2 8h99" stroke="#ee1c25" strokeWidth="5" />
                    <path d="M20 5.500h70" stroke="#fff" strokeDasharray="6 3" />
                  </StruckName>
                </Crumb>
                <CrumbArrow />
                <Crumb>网站</Crumb>
                <CrumbArrow />
                <Crumb>我的第一个网站</Crumb>
                <CrumbArrow />
              </AddressBox>
              <AddressTools>
                <button aria-label="刷新">
                  <Icon>
                    <rect x=".5" y="1" width="15" height="14" fill="url(#green)" stroke="#5aa860" />
                    <path d="M1.500 8L5 4.500V7c0 0 0 3 3 3v2c-4 0-5-2-5-4zM14.500 8L11 11.500V9s0-3-3-3V4c4 0 5 2 5 4z" fill="#fff" />
                  </Icon>
                </button>
                <button aria-label="停止">
                  <Icon>
                    <rect x=".5" y="1" width="15" height="14" fill="#c4ccd6" stroke="#b0b9c4" />
                    <path d="M4 4l8 8M12 4l-8 8" stroke="#949ca6" strokeWidth="1.800" />
                  </Icon>
                </button>
                <button aria-label="主页">
                  <Icon>
                    <path d="M8 0L0 8h2v7.500h12V8h2l-3-3V1.500h-2V3z" fill="#bcc2ca" stroke="#a0a8b2" strokeWidth=".8" />
                    <path d="M4 9h3v3H4zM9 9h3v6.500H9z" fill="#8e96a0" />
                  </Icon>
                </button>
                <HelpGroup>
                  <AddressDivider />
                  <button aria-label="帮助"><HelpRoundIcon /></button>
                  <DropArrow />
                </HelpGroup>
              </AddressTools>
            </AddressRow>
            <Panels>
              <ConnectionsPanel />
              <HomePanel />
              <ActionsPanel />
            </Panels>
          </Manager>
        </Workspace>
        <StatusBar>
          <StatusCell $w={133} />
          <StatusCell $w={85} />
          <StatusCell $w={1} />
        </StatusBar>
      </Window>
      <Watermark width="186" height="92" viewBox="0 0 186 92" aria-hidden="true">
        <g fill="#fff" fillOpacity=".85" stroke="#c4c4c4" strokeOpacity=".8" strokeWidth="2" paintOrder="stroke">
          <text x="1" y="57" fontSize="38" fontWeight="bold" fontFamily="Liberation Sans, sans-serif">Bai</text>
          <ellipse cx="69" cy="25" rx="6.500" ry="9" />
          <ellipse cx="81" cy="12" rx="6.500" ry="9" />
          <ellipse cx="98" cy="13" rx="6.500" ry="9" transform="rotate(12 98 13)" />
          <ellipse cx="108" cy="29" rx="6.500" ry="8.500" />
          <path d="M88 27c8 0 10 8 16 13 8 7 8 18-3 20-6 1-8-1-13-1s-8 2-14 1c-10-2-10-13-2-20 6-5 8-13 16-13z" />
          <text x="73" y="55" fontSize="26" fontWeight="bold" fontFamily="Liberation Sans, sans-serif">du</text>
          <text x="116" y="56" fontSize="30" fontWeight="bold" fontFamily="Noto Sans CJK SC, sans-serif">经验</text>
          <text x="1" y="82" fontSize="20">jingyan.baidu.com</text>
        </g>
      </Watermark>
    </Desktop>
  );
}
